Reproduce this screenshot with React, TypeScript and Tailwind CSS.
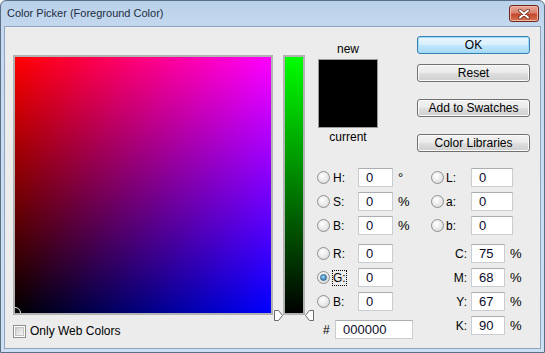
import React from 'react';

const font = "font-['Liberation_Sans','Arial',sans-serif]";

function Radio({ checked = false }: { checked?: boolean }) {
  return (
    <span className="flex h-[13px] w-[13px] shrink-0 items-center justify-center rounded-full border border-[#8e8f8f] bg-[radial-gradient(circle_at_40%_35%,#ffffff,#d4d4d4)]">
      {checked && (
        <span className="h-[7px] w-[7px] rounded-full border border-[#2c628b] bg-[radial-gradient(circle_at_40%_35%,#9fd6fd,#1d68a8)]" />
      )}
    </span>
  );
}

function Field({ value, w }: { value: string; w: string }) {
  return (
    <span
      className={`flex h-[19px] ${w} items-center border border-[#c9ccd1] border-t-[#abadb3] bg-white pl-[7px] text-[13px] text-[#0c0c2a]`}
    >
      {value}
    </span>
  );
}

function LeftRow({ label, value, unit, checked, focus }: { label: string; value: string; unit?: string; checked?: boolean; focus?: boolean }) {
  return (
    <div className="flex h-[19px] items-center">
      <span className="ml-[1px]">
        <Radio checked={checked} />
      </span>
      <span className="ml-[3px] w-[25px]">
        <span className={focus ? 'ml-[-1px] border border-dotted border-black' : ''}>{label}</span>
      </span>
      <Field value={value} w="w-[35px]" />
      {unit && <span className="ml-[5px] text-[13px]">{unit}</span>}
    </div>
  );
}

function LabRow({ label, value }: { label: string; value: string }) {
  return (
    <div className="flex h-[19px] items-center">
      <Radio />
      <span className="ml-[2px] w-[25px]">{label}</span>
      <Field value={value} w="w-[42px]" />
    </div>
  );
}

function CmykRow({ label, value }: { label: string; value: string }) {
  return (
    <div className="flex h-[19px] items-center">
      <span className="w-[40px] pr-[4px] text-right">{label}</span>
      <Field value={value} w="w-[34px]" />
      <span className="ml-[5px] text-[13px]">%</span>
    </div>
  );
}

function Button({ children, primary = false, className = '' }: { children: React.ReactNode; primary?: boolean; className?: string }) {
  return (
    <div
      className={`flex h-[18px] w-[113px] items-center justify-center rounded-[3px] border text-[12px] ${
        primary
          ? 'border-[#3c7fb1] bg-[linear-gradient(to_bottom,#eaf6fd_0%,#d9f0fc_45%,#bee6fd_55%,#a7d9f5_100%)] shadow-[inset_0_0_0_1px_#9ddcf8]'
          : 'border-[#707070] bg-[linear-gradient(to_bottom,#f2f2f2_0%,#ebebeb_45%,#dddddd_55%,#cfcfcf_100%)] shadow-[inset_0_0_0_1px_#fbfbfb]'
      } ${className}`}
    >
      {children}
    </div>
  );
}

export default function App() {
  return (
    <div
      className={`${font} h-[353px] w-[545px] overflow-hidden rounded-t-[6px] border border-[#5c6f88] bg-[linear-gradient(to_bottom,#b9d1ea,#c6daef_30px,#cddff2)] text-[12px] text-black`}
    >
      {/* title bar */}
      <div className="flex h-[25px] items-center justify-between pl-[6px] pr-[5px]">
        <span className="text-[11px] text-[#1e2c3f]">Color Picker (Foreground Color)</span>
        <div className="flex h-[17px] w-[30px] items-center justify-center rounded-[3px] border border-[#6f2518] bg-[linear-gradient(to_bottom,#e8a593_0%,#d98470_45%,#c6462e_55%,#d2754f_100%)] shadow-[inset_0_0_0_1px_#f0b7a8]">
          <svg width="12" height="10" viewBox="0 0 12 10">
            <path d="M2 1.5 L10 8.5 M10 1.5 L2 8.5" stroke="#5a2418" strokeWidth="3.4" strokeLinecap="round" />
            <path d="M2 1.5 L10 8.5 M10 1.5 L2 8.5" stroke="#ffffff" strokeWidth="2" strokeLinecap="round" />
          </svg>
        </div>
      </div>

      {/* client area */}
      <div className="ml-[3px] flex h-[323px] w-[537px] items-start border border-[#8fa4c0] bg-[#ececec]">
        {/* colour field */}
        <div className="ml-[8px] mt-[28px] flex flex-col">
          <div className="h-[260px] w-[260px] border-2 border-[#b2b2b2]">
            <div className="relative h-full w-full overflow-hidden bg-[linear-gradient(to_bottom,#ff0000,#000000),linear-gradient(to_right,#000000,#0000ff)] bg-blend-screen">
              <span className="absolute bottom-[-6px] left-[-6px] h-[12px] w-[12px] rounded-full border-[1.5px] border-[#e8e8e8]" />
            </div>
          </div>
          <div className="mt-[7px] flex items-center">
            <span className="flex h-[13px] w-[13px] items-center justify-center border border-[#8e8f8f] bg-white">
              <span className="h-[9px] w-[9px] border border-[#c4c4c4] bg-[linear-gradient(135deg,#cfcfcf,#f6f6f6)]" />
            </span>
            <span className="ml-[4px]">Only Web Colors</span>
          </div>
        </div>

        {/* green slider */}
        <div className="relative ml-[10px] mt-[28px] h-[260px] w-[22px] border-2 border-[#b2b2b2]">
          <div className="h-full w-full bg-[linear-gradient(to_bottom,#00ff00,#000000)]" />
          <svg className="absolute bottom-[-8px] left-[-11px]" width="9" height="11" viewBox="0 0 9 11">
            <path d="M0.5 0.5 L4.5 0.5 L8.5 5.5 L4.5 10.5 L0.5 10.5 Z" fill="#ffffff" stroke="#6a6a6a" />
          </svg>
          <svg className="absolute bottom-[-8px] right-[-11px]" width="9" height="11" viewBox="0 0 9 11">
            <path d="M8.5 0.5 L4.5 0.5 L0.5 5.5 L4.5 10.5 L8.5 10.5 Z" fill="#ffffff" stroke="#6a6a6a" />
          </svg>
        </div>

        {/* right side */}
        <div className="ml-[11px] mt-[9px] flex flex-col">
          <div className="flex items-start">
            <div className="ml-[2px] flex w-[60px] flex-col items-center">
              <span className="mt-[6px] leading-[14px]">new</span>
              <div className="mt-[3px] h-[69px] w-[60px] border border-[#9a9a9a] bg-black" />
              <span className="mt-[2px] leading-[14px]">current</span>
            </div>
            <div className="ml-[39px] flex flex-col">
              <Button primary>OK</Button>
              <Button className="mt-[10px]">Reset</Button>
              <Button className="mt-[17px]">Add to Swatches</Button>
              <Button className="mt-[17px]">Color Libraries</Button>
            </div>
          </div>

          <div className="mt-[16px] flex items-start">
            <div className="flex w-[115px] flex-col">
              <div className="flex flex-col gap-[5px]">
                <LeftRow label="H:" value="0" unit="°" />
                <LeftRow label="S:" value="0" unit="%" />
                <LeftRow label="B:" value="0" unit="%" />
              </div>
              <div className="mt-[9px] flex flex-col gap-[5px]">
                <LeftRow label="R:" value="0" />
                <LeftRow label="G:" value="0" checked focus />
                <LeftRow label="B:" value="0" />
              </div>
              <div className="mt-[9px] flex h-[19px] items-center">
                <span className="ml-[7px] w-[12px]">#</span>
                <Field value="000000" w="w-[78px]" />
              </div>
            </div>
            <div className="flex flex-col">
              <div className="flex flex-col gap-[5px]">
                <LabRow label="L:" value="0" />
                <LabRow label="a:" value="0" />
                <LabRow label="b:" value="0" />
              </div>
              <div className="mt-[9px] flex flex-col gap-[5px]">
                <CmykRow label="C:" value="75" />
                <CmykRow label="M:" value="68" />
                <CmykRow label="Y:" value="67" />
                <CmykRow label="K:" value="90" />
              </div>
            </div>
          </div>
        </div>
      </div>
    </div>
  );
}
